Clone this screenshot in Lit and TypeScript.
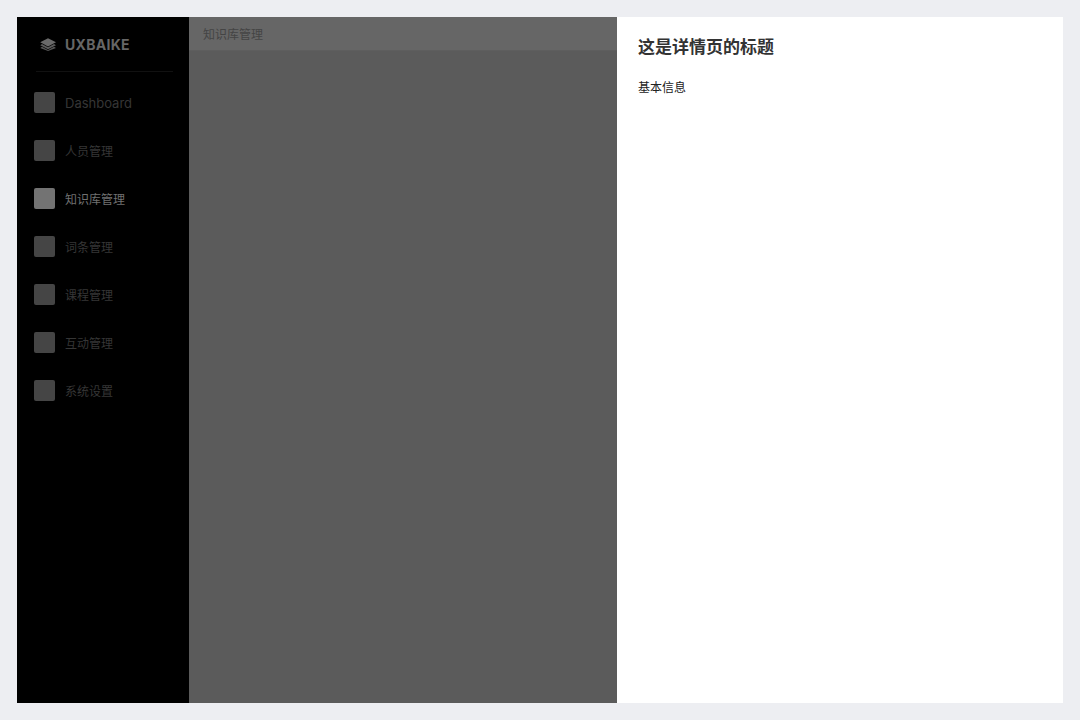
import { LitElement, html, css } from "lit";
import { customElement } from "lit/decorators.js";

const NAV = ["Dashboard", "人员管理", "知识库管理", "词条管理", "课程管理", "互动管理", "系统设置"];
const ACTIVE = 2;

@customElement("app-root")
export class AppRoot extends LitElement {
  static styles = css`
    :host {
      display: block;
      width: 1080px;
      height: 720px;
      box-sizing: border-box;
      padding: 17px;
      background: #edeef2;
      font-family: "Noto Sans CJK SC", "Noto Sans CJK JP", sans-serif;
    }
    .frame {
      display: flex;
      width: 1046px;
      height: 686px;
    }
    .side {
      width: 171.5px;
      flex: none;
      background: #000;
      display: flex;
      flex-direction: column;
      padding-left: 17px;
      box-sizing: border-box;
    }
    .brand {
      height: 55px;
      box-sizing: border-box;
      margin: 0 16px 0 2px;
      padding-left: 3px;
      display: flex;
      align-items: center;
      gap: 9px;
      border-bottom: 1px solid #111;
    }
    .brand svg {
      width: 17px;
      height: 17px;
      flex: none;
    }
    .brand span {
      font-family: Inter, sans-serif;
      font-weight: 700;
      font-size: 14px;
      letter-spacing: 0.3px;
      color: #666;
    }
    .nav {
      display: flex;
      flex-direction: column;
      padding-top: 6px;
    }
    .item {
      height: 48px;
      display: flex;
      align-items: center;
      gap: 10px;
      font-size: 12px;
      color: #363636;
    }
    .item .ic {
      width: 21px;
      height: 21px;
      border-radius: 2px;
      background: #454545;
      flex: none;
    }
    .item.en span {
      font-family: Inter, sans-serif;
      font-size: 13px;
      padding-top: 2px;
    }
    .item.active {
      color: #707070;
    }
    .item.active .ic {
      background: #737373;
    }
    .main {
      flex: 1;
      background: #5b5b5b;
    }
    .crumb {
      height: 34px;
      box-sizing: border-box;
      padding: 8px 0 0 14.5px;
      background: #666;
      border-bottom: 1px solid #5e5e5e;
      font-size: 12px;
      line-height: 18px;
      color: #444;
    }
    .panel {
      width: 446px;
      flex: none;
      background: #fff;
      padding: 18px 21px;
      box-sizing: border-box;
    }
    h1 {
      margin: 0;
      font-size: 17px;
      line-height: 22px;
      font-weight: 700;
      color: #333;
    }
    h2 {
      margin: 21px 0 0;
      font-size: 12px;
      line-height: 18px;
      font-weight: 400;
      color: #222;
    }
  `;

  render() {
    return html`
      <div class="frame">
        <aside class="side">
          <div class="brand">
            <svg viewBox="0 0 17 17" aria-hidden="true">
              <path fill="#6a6a6a" d="M9 2.2 17 6.3 9 10.4 1.2 6.3z" />
              <path fill="#5c5c5c" d="M3 8.1 9 11.2l6-3.1L17 9.2 9 13.2 1.2 9.2z" />
              <path fill="#565656" d="M3 10.8 9 13.9l6-3.1L17 11.9 9 15 1.2 11.9z" />
            </svg>
            <span>UXBAIKE</span>
          </div>
          <nav class="nav">
            ${NAV.map(
              (label, i) => html`
                <div class="item ${i === ACTIVE ? "active" : ""} ${i === 0 ? "en" : ""}">
                  <div class="ic"></div>
                  <span>${label}</span>
                </div>
              `
            )}
          </nav>
        </aside>
        <main class="main">
          <div class="crumb">知识库管理</div>
        </main>
        <section class="panel">
          <h1>这是详情页的标题</h1>
          <h2>基本信息</h2>
        </section>
      </div>
    `;
  }
}
